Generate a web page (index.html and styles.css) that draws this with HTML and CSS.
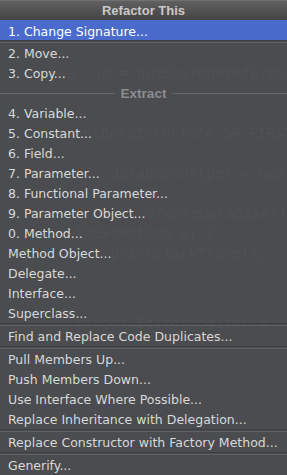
FILE: index.html
```html
<!DOCTYPE html>
<html lang="en">
<head>
  <meta charset="UTF-8" />
  <meta name="viewport" content="width=device-width, initial-scale=1" />
  <title>Refactor This</title>
  <link rel="stylesheet" href="styles.css">
</head>
<body>
  <div class="screen">
    <!-- editor code showing through the popup -->
    <div class="code" aria-hidden="true">
      <div class="line l1">ences  sp = getSharedPreferences(</div>
      <div class="line l2">n(DataInterface.SP_FIRST</div>
      <div class="line l3">dataBaseHelper = new</div>
      <div class="line l4">createDataBase();</div>
      <div class="line l5">IOException e) {</div>
      <div class="line l6">printStackTrace();</div>
      <div class="line l7">rences.Editor editor =</div>
    </div>

    <div class="popup">
      <div class="popup-title">Refactor This</div>

      <ul class="menu">
        <li class="item selected">1. Change Signature...</li>
        <li class="sep"></li>
        <li class="item">2. Move...</li>
        <li class="item">3. Copy...</li>
        <li class="group"><span>Extract</span></li>
        <li class="item">4. Variable...</li>
        <li class="item">5. Constant...</li>
        <li class="item">6. Field...</li>
        <li class="item">7. Parameter...</li>
        <li class="item">8. Functional Parameter...</li>
        <li class="item">9. Parameter Object...</li>
        <li class="item">0. Method...</li>
        <li class="item">Method Object...</li>
        <li class="item">Delegate...</li>
        <li class="item">Interface...</li>
        <li class="item">Superclass...</li>
        <li class="sep"></li>
        <li class="item">Find and Replace Code Duplicates...</li>
        <li class="sep"></li>
        <li class="item">Pull Members Up...</li>
        <li class="item">Push Members Down...</li>
        <li class="item">Use Interface Where Possible...</li>
        <li class="item">Replace Inheritance with Delegation...</li>
        <li class="sep"></li>
        <li class="item">Replace Constructor with Factory Method...</li>
        <li class="sep"></li>
        <li class="item">Generify...</li>
      </ul>
    </div>
  </div>
</body>
</html>
```

FILE: styles.css
```css
* {
  box-sizing: border-box;
}

body {
  margin: 0;
  background-color: #4a4c4f;
  font-family: "DejaVu Sans", "Liberation Sans", sans-serif;
  font-size: 12.5px;
  color: #d9d9d9;
}

.screen {
  position: relative;
  width: 287px;
  height: 475px;
  overflow: hidden;
}

/* faint code behind the translucent popup */
.code {
  position: absolute;
  inset: 0;
  font-family: "DejaVu Sans Mono", monospace;
  font-size: 14.5px;
  color: #4f5154;
}

.code .line {
  position: absolute;
  height: 20px;
  line-height: 20px;
  white-space: pre;
}

.l1 { top: 63px; left: 32px; }
.l2 { top: 123px; left: 83px; }
.l3 { top: 163px; left: 110px; }
.l4 { top: 203px; left: 147px; }
.l5 { top: 223px; left: 75px; }
.l6 { top: 243px; left: 110px; }
.l7 { top: 313px; left: 75px; }

.popup {
  position: relative;
  width: 287px;
  height: 475px;
}

.popup-title {
  height: 20px;
  line-height: 19px;
  text-align: center;
  font-family: "Liberation Sans", sans-serif;
  font-size: 13px;
  font-weight: bold;
  color: #c9c9c9;
  background: linear-gradient(#606060, #434343);
  border-top: 1px solid #707070;
}

.menu {
  list-style: none;
  margin: 0;
  padding: 0;
}

.item {
  height: 20px;
  line-height: 20px;
  padding-top: 1px;
  padding-left: 8px;
  white-space: nowrap;
}

.item.selected {
  padding-top: 2px;
  background-color: #4a6bcc;
  color: #ffffff;
}

.sep {
  height: 3px;
  border-top: 1px solid #3d3e41;
  border-bottom: 1px solid #5d5f62;
}

.group {
  height: 20px;
  display: flex;
  align-items: center;
  gap: 6px;
  font-family: "Liberation Sans", sans-serif;
  font-size: 13.5px;
  font-weight: bold;
  color: #8b8c8e;
}

.group::before,
.group::after {
  content: "";
  flex: 1;
  height: 1px;
  background-color: #65666a;
}
```
